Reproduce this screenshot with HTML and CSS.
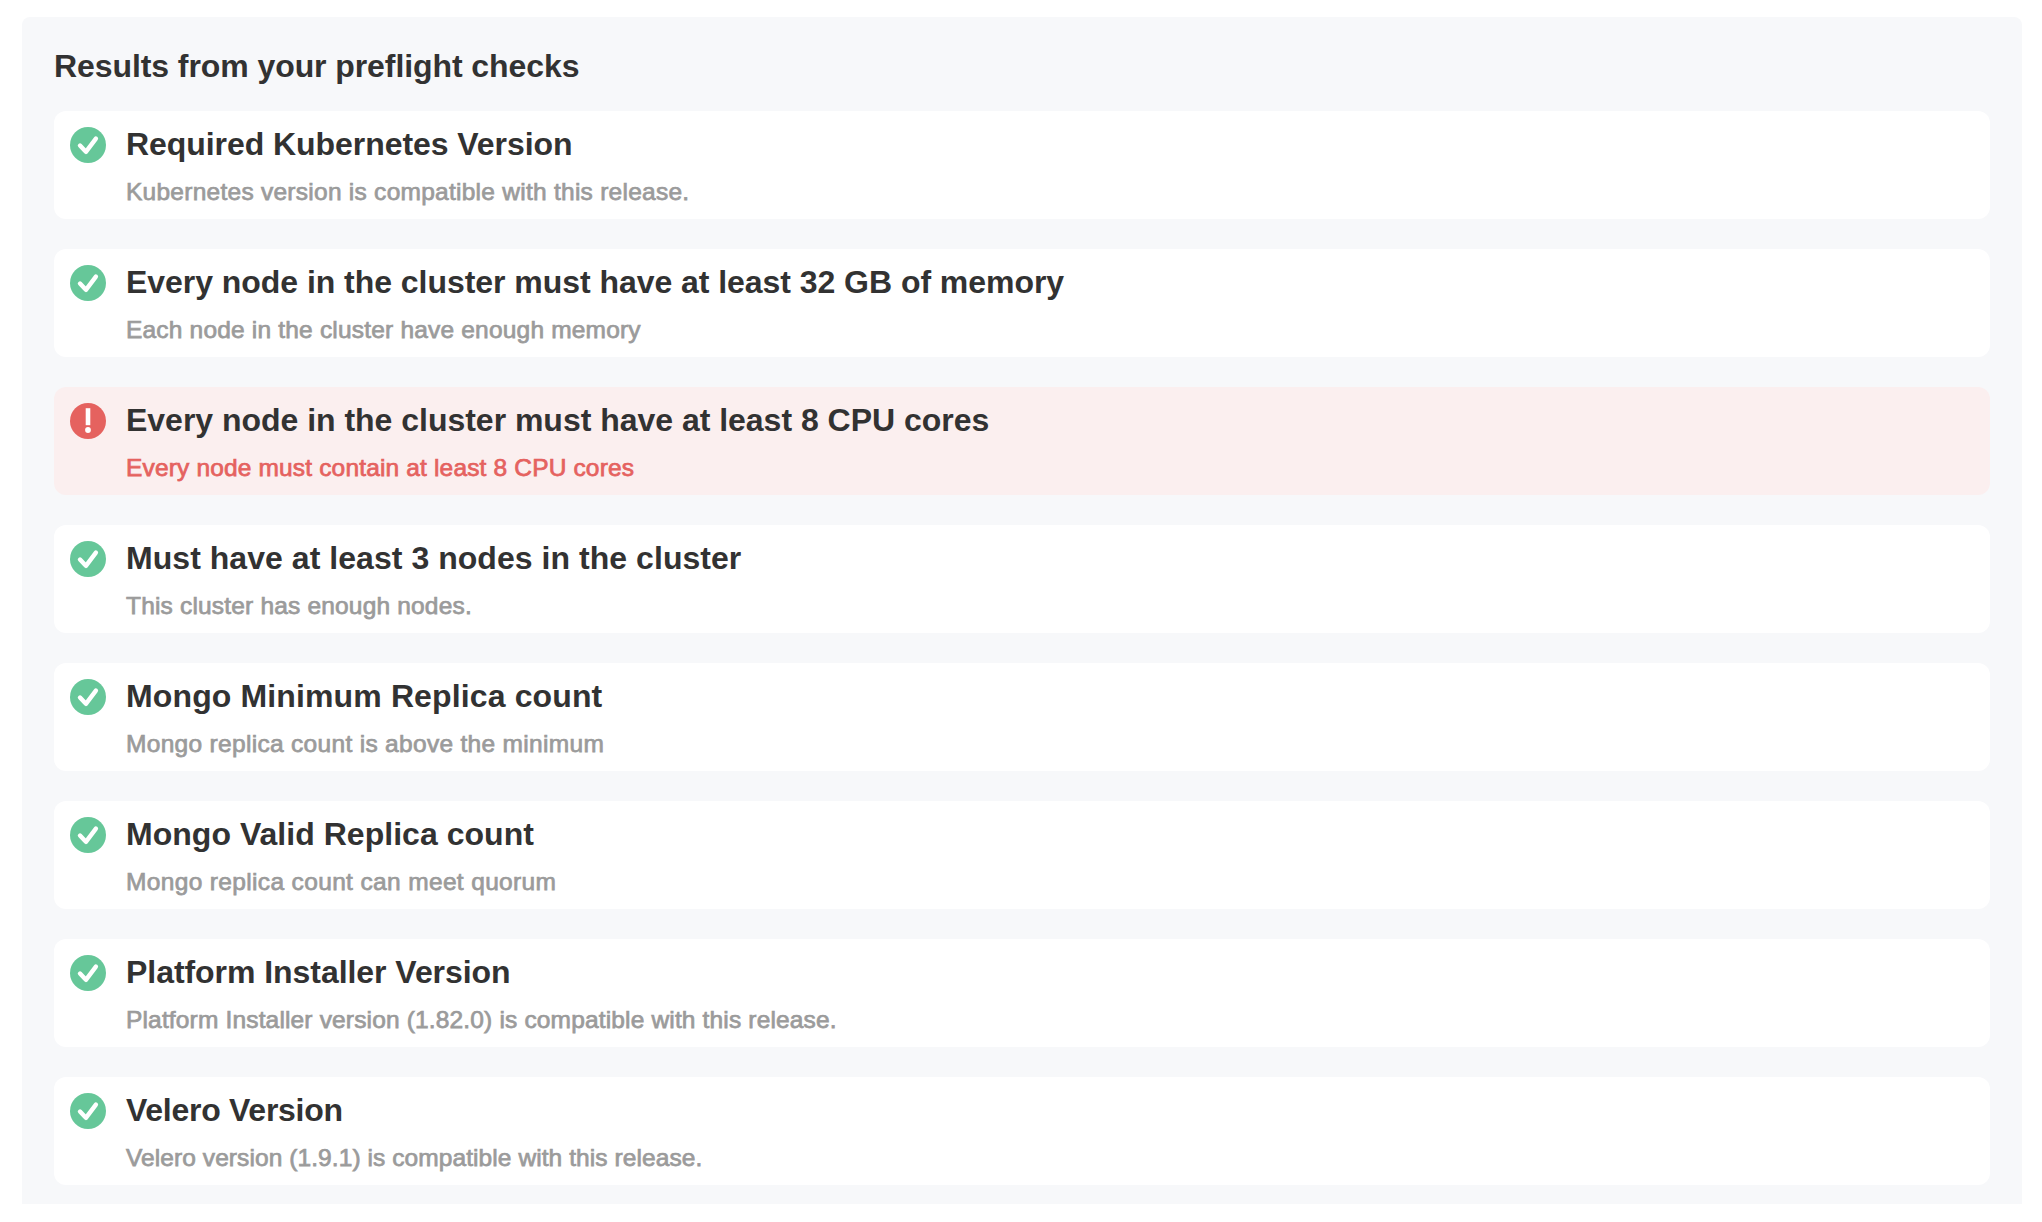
FILE: index.html
```
<!DOCTYPE html>
<html lang="en">
<head>
<meta charset="utf-8">
<title>Preflight checks</title>
<link rel="stylesheet" href="styles.css">
</head>
<body>
<svg class="sprite" aria-hidden="true">
  <symbol id="pass" viewBox="0 0 36 36"><circle cx="18" cy="18" r="18" fill="#66c799"/><path d="M10 18.5l5.9 6.3L25.9 11.6" fill="none" stroke="#fff" stroke-width="4.4" stroke-linecap="round" stroke-linejoin="round"/></symbol>
  <symbol id="fail" viewBox="0 0 36 36"><circle cx="18" cy="18" r="18" fill="#e5625f"/><path d="M15.7 5.2h4.6v17h-4.6z" fill="#fff"/><circle cx="18" cy="27" r="2.9" fill="#fff"/></symbol>
</svg>
<main class="panel">
  <h1 class="heading">Results from your preflight checks</h1>
  <ul class="checks">
    <li class="check kubernetes">
      <svg class="icon"><use href="#pass"/></svg>
      <div class="body"><h2 class="title">Required Kubernetes Version</h2><p class="message">Kubernetes version is compatible with this release.</p></div>
    </li>
    <li class="check memory">
      <svg class="icon"><use href="#pass"/></svg>
      <div class="body"><h2 class="title">Every node in the cluster must have at least 32 GB of memory</h2><p class="message">Each node in the cluster have enough memory</p></div>
    </li>
    <li class="check cpu failed">
      <svg class="icon"><use href="#fail"/></svg>
      <div class="body"><h2 class="title">Every node in the cluster must have at least 8 CPU cores</h2><p class="message">Every node must contain at least 8 CPU cores</p></div>
    </li>
    <li class="check nodes">
      <svg class="icon"><use href="#pass"/></svg>
      <div class="body"><h2 class="title">Must have at least 3 nodes in the cluster</h2><p class="message">This cluster has enough nodes.</p></div>
    </li>
    <li class="check mongo-minimum">
      <svg class="icon"><use href="#pass"/></svg>
      <div class="body"><h2 class="title">Mongo Minimum Replica count</h2><p class="message">Mongo replica count is above the minimum</p></div>
    </li>
    <li class="check mongo-valid">
      <svg class="icon"><use href="#pass"/></svg>
      <div class="body"><h2 class="title">Mongo Valid Replica count</h2><p class="message">Mongo replica count can meet quorum</p></div>
    </li>
    <li class="check installer">
      <svg class="icon"><use href="#pass"/></svg>
      <div class="body"><h2 class="title">Platform Installer Version</h2><p class="message">Platform Installer version (1.82.0) is compatible with this release.</p></div>
    </li>
    <li class="check velero">
      <svg class="icon"><use href="#pass"/></svg>
      <div class="body"><h2 class="title">Velero Version</h2><p class="message">Velero version (1.9.1) is compatible with this release.</p></div>
    </li>
  </ul>
</main>
</body>
</html>
```
FILE: styles.css
```
body {
  margin: 0;
  padding: 17px 20px 18px 22px;
  background: #fff;
  color: #323232;
  font-family: "Helvetica Neue", "Liberation Sans", Arial, sans-serif;
}
.sprite { position: absolute; width: 0; height: 0; }
.panel {
  box-sizing: border-box;
  height: 1187px;
  padding: 30px 32px 19px;
  border-radius: 8px 8px 0 0;
  background: #f7f8fa;
}
.heading, .title {
  margin: 0;
  font-size: 32px;
  font-weight: 700;
  line-height: 38px;
}
.heading { letter-spacing: -0.08px; }
.checks {
  display: grid;
  gap: 30px;
  margin: 26px 0 0;
  padding: 0;
  list-style: none;
}
.check {
  display: flex;
  gap: 20px;
  box-sizing: border-box;
  height: 108px;
  padding: 16px;
  border-radius: 12px;
  background: #fff;
}
.icon { flex: none; width: 36px; height: 36px; }
.body { margin-top: -2px; }
.message {
  margin: 15px 0 0;
  color: #9b9b9b;
  font-size: 24.5px;
  line-height: 28px;
  -webkit-text-stroke: 0.75px currentColor;
}
.failed { background: #fbefef; }
.failed .message { color: #e5625f; }

/* Tracking per check */
.kubernetes .title { letter-spacing: -0.06px; }
.kubernetes .message { letter-spacing: 0.26px; }
.memory .title { letter-spacing: -0.045px; }
.memory .message { letter-spacing: 0.19px; }
.cpu .title { letter-spacing: -0.02px; }
.cpu .message { letter-spacing: 0.16px; }
.nodes .title { letter-spacing: 0.045px; }
.nodes .message { letter-spacing: 0.18px; }
.mongo-minimum .title { letter-spacing: 0.13px; }
.mongo-minimum .message { letter-spacing: 0.31px; }
.mongo-valid .title { letter-spacing: 0.03px; }
.mongo-valid .message { letter-spacing: 0.35px; }
.installer .title { letter-spacing: -0.05px; }
.installer .message { letter-spacing: 0.16px; }
.velero .title { letter-spacing: -0.27px; }
.velero .message { letter-spacing: 0.08px; }
```
